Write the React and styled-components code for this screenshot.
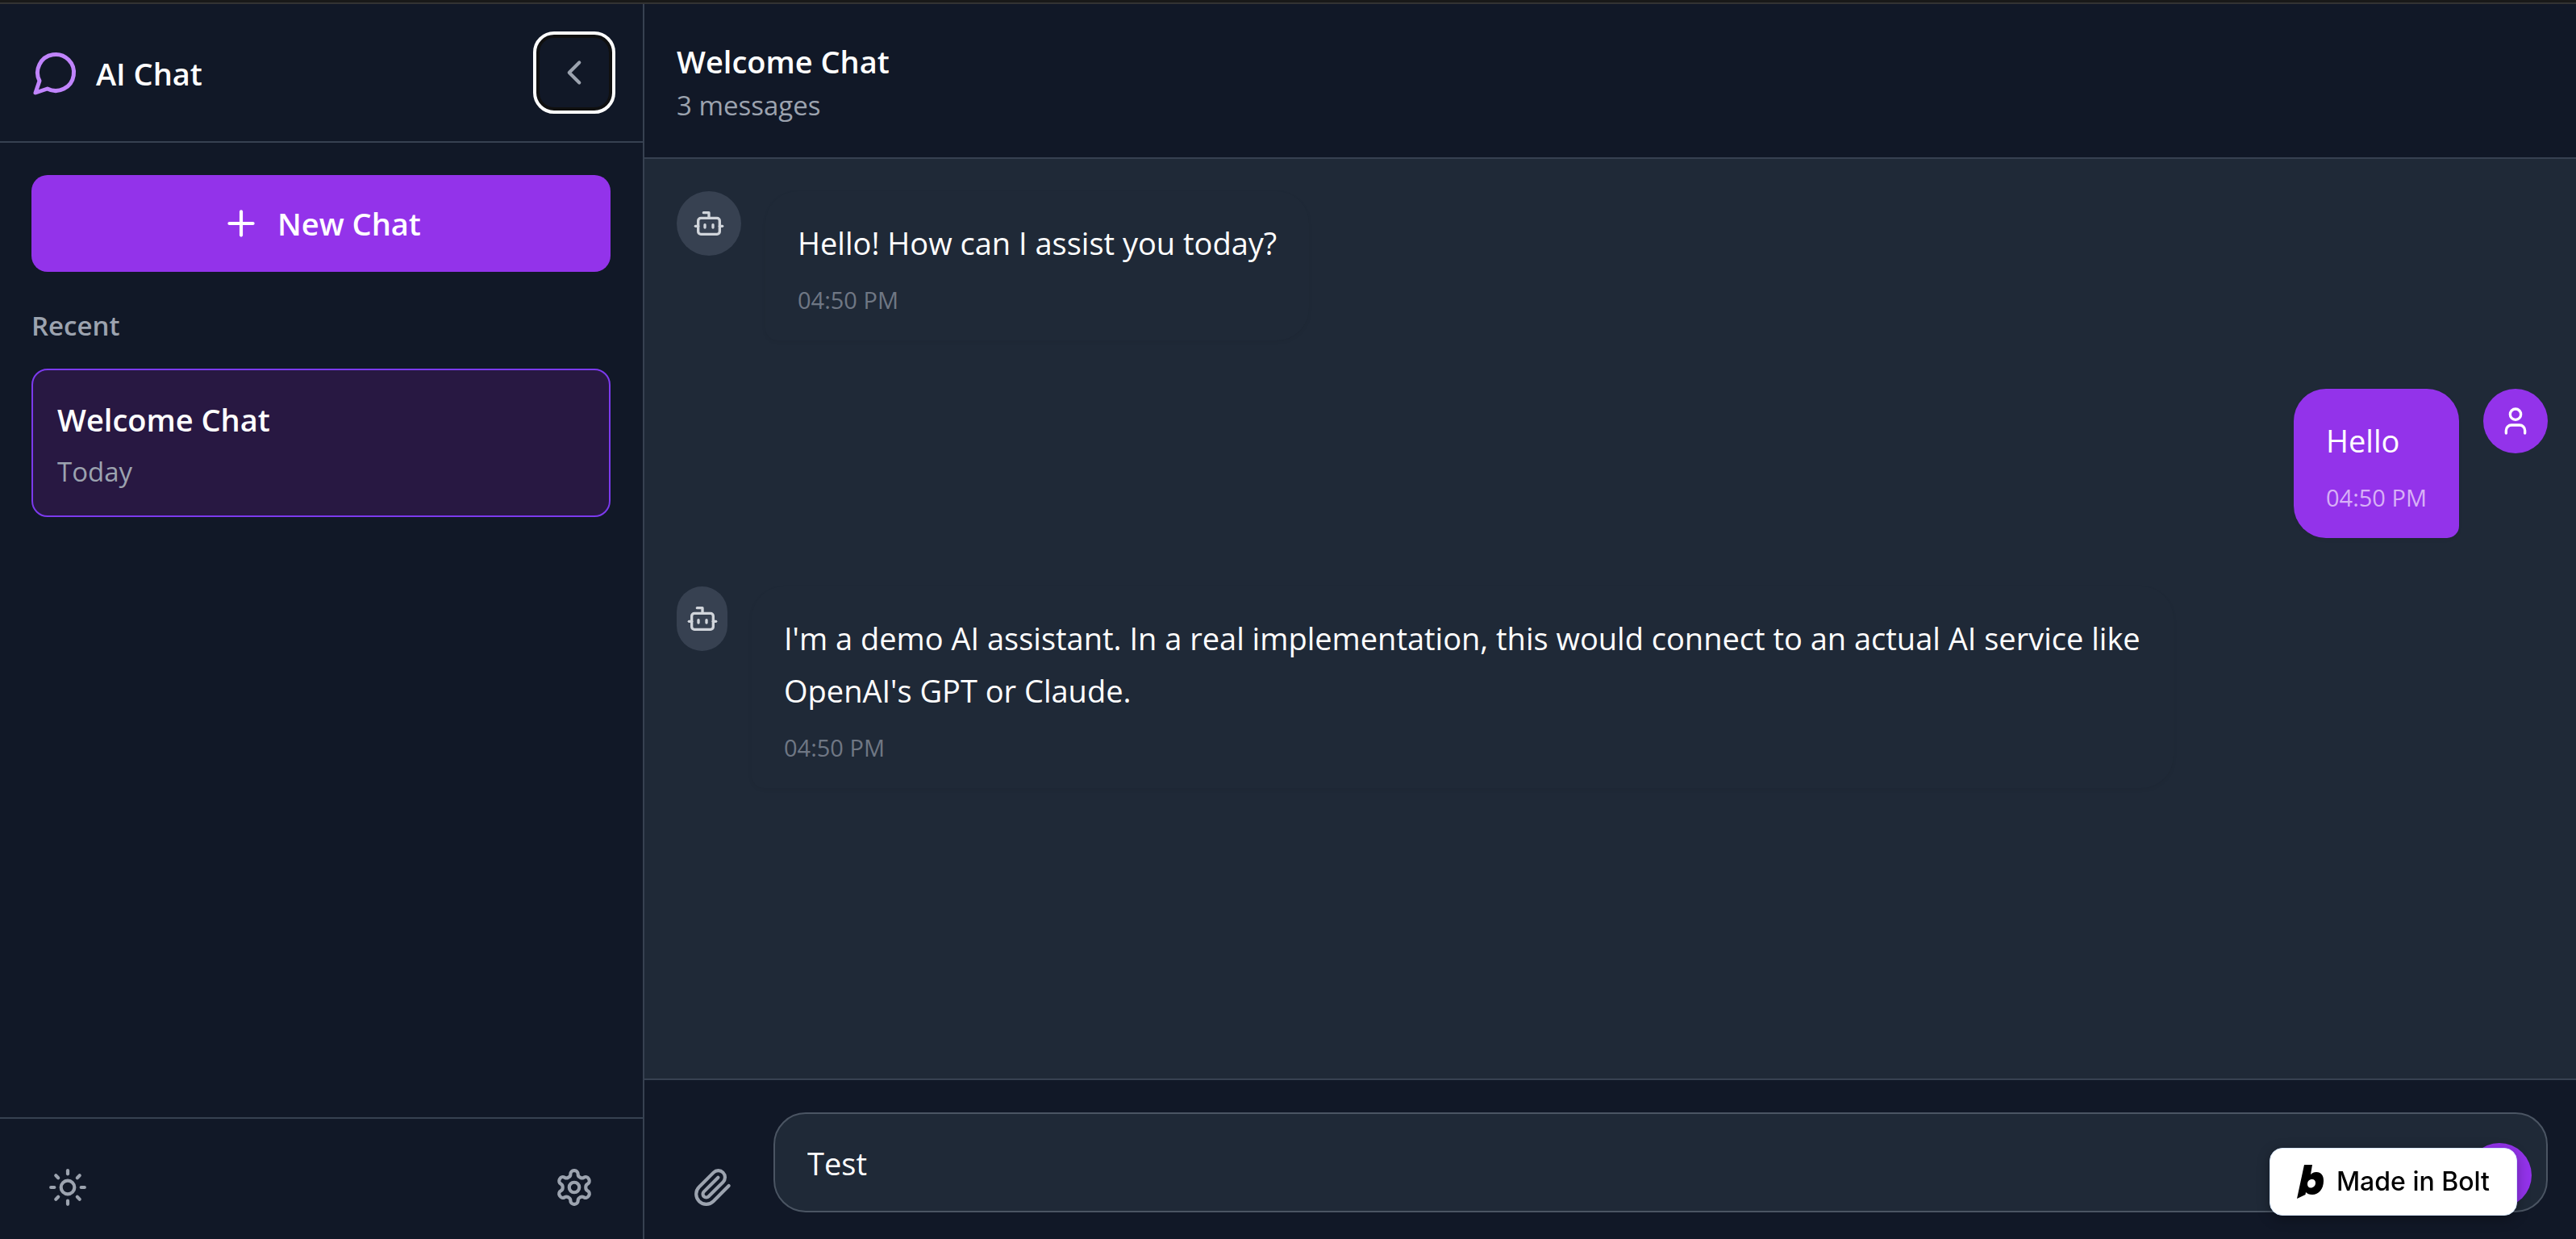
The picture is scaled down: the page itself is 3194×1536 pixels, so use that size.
import React from "react";
import styled, { createGlobalStyle } from "styled-components";
import { ChevronLeft, Plus, Sun, Bot, User, Send } from "lucide-react";

const GlobalStyle = createGlobalStyle`
  *, *::before, *::after { box-sizing: border-box; }
  body {
    margin: 0;
    background: #111827;
    color: #ffffff;
    font-family: "Open Sans", "Noto Sans", sans-serif;
    font-size: 38px;
    line-height: 60px;
  }
  h1, h2, h3, p { margin: 0; }
  button { font: inherit; color: inherit; border: 0; cursor: pointer; }
`;

const Page = styled.div`
  height: 100vh;
  display: flex;
  flex-direction: column;
`;

const WindowEdge = styled.div`
  flex: none;
  height: 5px;
  background: #191919;
  border-bottom: 2px solid #333333;
`;

const Shell = styled.div`
  flex: 1;
  min-height: 0;
  display: flex;
`;

const Sidebar = styled.aside`
  flex: none;
  width: 799px;
  display: flex;
  flex-direction: column;
  background: #111827;
  border-right: 2px solid #374151;
`;

const SidebarHeader = styled.header`
  display: flex;
  align-items: center;
  justify-content: space-between;
  padding: 40px 40px 40px 39px;
  border-bottom: 2px solid #374151;
`;

const Brand = styled.div`
  display: flex;
  align-items: center;
  gap: 20px;
  color: #c084fc;
`;

const BrandName = styled.h1`
  padding-top: 2px;
  font-size: 38px;
  line-height: 60px;
  font-weight: 600;
  color: #ffffff;
`;

const IconButton = styled.button`
  display: flex;
  padding: 20px;
  border-radius: 20px;
  background: transparent;
  color: #9ca3af;
  outline: ${(p) => (p.$focused ? "4px solid #ffffff" : "none")};
  outline-offset: 2px;
  box-shadow: ${(p) => (p.$focused ? "0 0 0 2px #101010, inset 0 0 0 2px #101010" : "none")};
`;

const SidebarBody = styled.div`
  flex: 1;
  padding: 40px 40px 40px 39px;
`;

const NewChatButton = styled.button`
  width: 100%;
  height: 120px;
  display: flex;
  align-items: center;
  justify-content: center;
  gap: 20px;
  border-radius: 20px;
  background: #9333ea;
  font-weight: 600;
`;

const SectionTitle = styled.h2`
  margin: 42px 0 28px;
  font-size: 33px;
  line-height: 50px;
  font-weight: 600;
  color: #9ca3af;
`;

const ChatItem = styled.button`
  display: block;
  width: 100%;
  padding: 31px 30px 29px;
  text-align: left;
  border: 2px solid #7c3aed;
  border-radius: 20px;
  background: #281842;
`;

const ChatItemTitle = styled.div`
  font-weight: 600;
`;

const Muted = styled.p`
  margin-top: ${(p) => p.$gap || 0}px;
  font-size: 33px;
  line-height: 50px;
  color: #9ca3af;
`;

const SidebarFooter = styled.footer`
  display: flex;
  justify-content: space-between;
  padding: 40px 40px 19px 39px;
  border-top: 2px solid #374151;
`;

const Main = styled.main`
  flex: 1;
  min-width: 0;
  display: flex;
  flex-direction: column;
  background: #1f2937;
`;

const ChatHeader = styled.header`
  padding: 41px 40px 39px;
  background: #111827;
  border-bottom: 2px solid #374151;
`;

const ChatTitle = styled.h2`
  font-size: 38px;
  line-height: 60px;
  font-weight: 600;
`;

const Messages = styled.div`
  flex: 1;
  min-height: 0;
  overflow: hidden;
  display: flex;
  flex-direction: column;
  gap: 60px;
  padding: 40px 35px 40px 40px;
`;

const MessageRow = styled.div`
  display: flex;
  align-items: flex-start;
  gap: 30px;
  max-width: 80%;
  flex-direction: ${(p) => (p.$mine ? "row-reverse" : "row")};
  align-self: ${(p) => (p.$mine ? "flex-end" : "flex-start")};
`;

const Avatar = styled.div`
  flex: none;
  width: ${(p) => (p.$narrow ? 63 : 80)}px;
  height: 80px;
  display: flex;
  align-items: center;
  justify-content: center;
  border-radius: 999px;
  background: ${(p) => (p.$mine ? "#9333ea" : "#374151")};
  color: ${(p) => (p.$mine ? "#ffffff" : "#d1d5db")};
`;

const Bubble = styled.div`
  padding: 32px 40px 30px;
  border-radius: ${(p) => (p.$mine ? "40px 40px 15px 40px" : "40px 40px 40px 15px")};
  background: ${(p) => (p.$mine ? "#9333ea" : "#1f2937")};
  box-shadow: 0 2px 5px rgba(0, 0, 0, 0.05);
`;

const MessageText = styled.p`
  line-height: 65px;
`;

const Time = styled.p`
  margin-top: 18px;
  font-size: 29px;
  line-height: 40px;
  color: ${(p) => (p.$mine ? "#d8b0f7" : "#6f7784")};
`;

const Composer = styled.form`
  display: flex;
  align-items: flex-end;
  gap: 30px;
  padding: 40px 35px 19px 40px;
  background: #111827;
  border-top: 2px solid #374151;
`;

const InputShell = styled.div`
  position: relative;
  flex: 1;
  padding-bottom: 14px;
`;

const MessageInput = styled.input`
  display: block;
  width: 100%;
  height: 124px;
  padding: 2px 120px 0 40px;
  border: 2px solid #4b5563;
  border-radius: 40px;
  background: #1f2937;
  color: #ffffff;
  font: inherit;
  outline: none;
`;

const SendButton = styled.button`
  position: absolute;
  right: 20px;
  bottom: 20px;
  width: 80px;
  height: 80px;
  display: flex;
  align-items: center;
  justify-content: center;
  border-radius: 50%;
  background: #9333ea;
`;

const Badge = styled.a`
  position: fixed;
  right: 73px;
  bottom: 29px;
  height: 84px;
  display: flex;
  align-items: center;
  gap: 16px;
  padding: 0 33px;
  border: 1px solid #dbeafe;
  border-radius: 16px;
  background: #ffffff;
  color: #000000;
  font-family: Inter, sans-serif;
  font-size: 32px;
  font-weight: 500;
  text-decoration: none;
  box-shadow: 0 4px 16px rgba(0, 0, 0, 0.3);
`;

const OutlineIcon = ({ size, children }) => (
  <svg
    width={size}
    height={size}
    viewBox="0 0 24 24"
    fill="none"
    stroke="currentColor"
    strokeWidth="2"
    strokeLinecap="round"
    strokeLinejoin="round"
    aria-hidden="true"
  >
    {children}
  </svg>
);

const SpeechIcon = ({ size }) => (
  <OutlineIcon size={size}>
    <path d="M7.9 20A9 9 0 1 0 4 16.1L2 22Z" />
  </OutlineIcon>
);

const ClipIcon = ({ size }) => (
  <OutlineIcon size={size}>
    <path d="m21.44 11.05-9.19 9.19a6 6 0 0 1-8.49-8.49l8.57-8.57A4 4 0 1 1 18 8.84l-8.59 8.57a2 2 0 0 1-2.83-2.83l8.49-8.48" />
  </OutlineIcon>
);

const GearIcon = ({ size }) => (
  <OutlineIcon size={size}>
    <path d="M12.22 2h-.44a2 2 0 0 0-2 2v.18a2 2 0 0 1-1 1.73l-.43.25a2 2 0 0 1-2 0l-.15-.08a2 2 0 0 0-2.73.73l-.22.38a2 2 0 0 0 .73 2.73l.15.1a2 2 0 0 1 1 1.72v.51a2 2 0 0 1-1 1.74l-.15.09a2 2 0 0 0-.73 2.73l.22.38a2 2 0 0 0 2.73.73l.15-.08a2 2 0 0 1 2 0l.43.25a2 2 0 0 1 1 1.73V20a2 2 0 0 0 2 2h.44a2 2 0 0 0 2-2v-.18a2 2 0 0 1 1-1.73l.43-.25a2 2 0 0 1 2 0l.15.08a2 2 0 0 0 2.73-.73l.22-.39a2 2 0 0 0-.73-2.73l-.15-.08a2 2 0 0 1-1-1.74v-.5a2 2 0 0 1 1-1.74l.15-.09a2 2 0 0 0 .73-2.73l-.22-.38a2 2 0 0 0-2.73-.73l-.15.08a2 2 0 0 1-2 0l-.43-.25a2 2 0 0 1-1-1.73V4a2 2 0 0 0-2-2z" />
    <circle cx="12" cy="12" r="3" />
  </OutlineIcon>
);

const BoltMark = () => (
  <svg width="33" height="42" viewBox="0 0 33 42" fill="#000000" aria-hidden="true">
    <path
      fillRule="evenodd"
      d="M9 0H19L17 12C19 10 21 9 24 9C30 9 33 13 33 20C33 30 27 37 19 37C15 37 13 36 11 34L10.500 37L0 42ZM19 18C15 18 13 20.500 13 24C13 26.500 14.500 28.500 17 28.500C20.500 28.500 23 26 23 22.500C23 19.500 21.500 18 19 18Z"
    />
  </svg>
);

const messages = [
  { id: 1, text: "Hello! How can I assist you today?", time: "04:50 PM" },
  { id: 2, text: "Hello", time: "04:50 PM", mine: true },
  {
    id: 3,
    text: "I'm a demo AI assistant. In a real implementation, this would connect to an actual AI service like OpenAI's GPT or Claude.",
    time: "04:50 PM",
    narrow: true,
  },
];

export default function App() {
  return (
    <Page>
      <GlobalStyle />
      <WindowEdge />
      <Shell>
        <Sidebar>
          <SidebarHeader>
            <Brand>
              <SpeechIcon size={60} />
              <BrandName>AI Chat</BrandName>
            </Brand>
            <IconButton type="button" aria-label="Collapse sidebar" $focused>
              <ChevronLeft size={50} />
            </IconButton>
          </SidebarHeader>
          <SidebarBody>
            <NewChatButton type="button">
              <Plus size={50} />
              New Chat
            </NewChatButton>
            <SectionTitle>Recent</SectionTitle>
            <ChatItem type="button">
              <ChatItemTitle>Welcome Chat</ChatItemTitle>
              <Muted as="div" $gap={10}>Today</Muted>
            </ChatItem>
          </SidebarBody>
          <SidebarFooter>
            <IconButton type="button" aria-label="Toggle theme">
              <Sun size={50} />
            </IconButton>
            <IconButton type="button" aria-label="Settings">
              <GearIcon size={50} />
            </IconButton>
          </SidebarFooter>
        </Sidebar>
        <Main>
          <ChatHeader>
            <ChatTitle>Welcome Chat</ChatTitle>
            <Muted>3 messages</Muted>
          </ChatHeader>
          <Messages>
            {messages.map((m) => (
              <MessageRow key={m.id} $mine={m.mine}>
                <Avatar $mine={m.mine} $narrow={m.narrow}>
                  {m.mine ? <User size={40} /> : <Bot size={40} />}
                </Avatar>
                <Bubble $mine={m.mine}>
                  <MessageText>{m.text}</MessageText>
                  <Time $mine={m.mine}>{m.time}</Time>
                </Bubble>
              </MessageRow>
            ))}
          </Messages>
          <Composer>
            <IconButton type="button" aria-label="Attach file">
              <ClipIcon size={50} />
            </IconButton>
            <InputShell>
              <MessageInput type="text" aria-label="Message" defaultValue="Test" />
              <SendButton type="submit" aria-label="Send message">
                <Send size={40} />
              </SendButton>
            </InputShell>
          </Composer>
        </Main>
      </Shell>
      <Badge href="#bolt">
        <BoltMark />
        Made in Bolt
      </Badge>
    </Page>
  );
}
